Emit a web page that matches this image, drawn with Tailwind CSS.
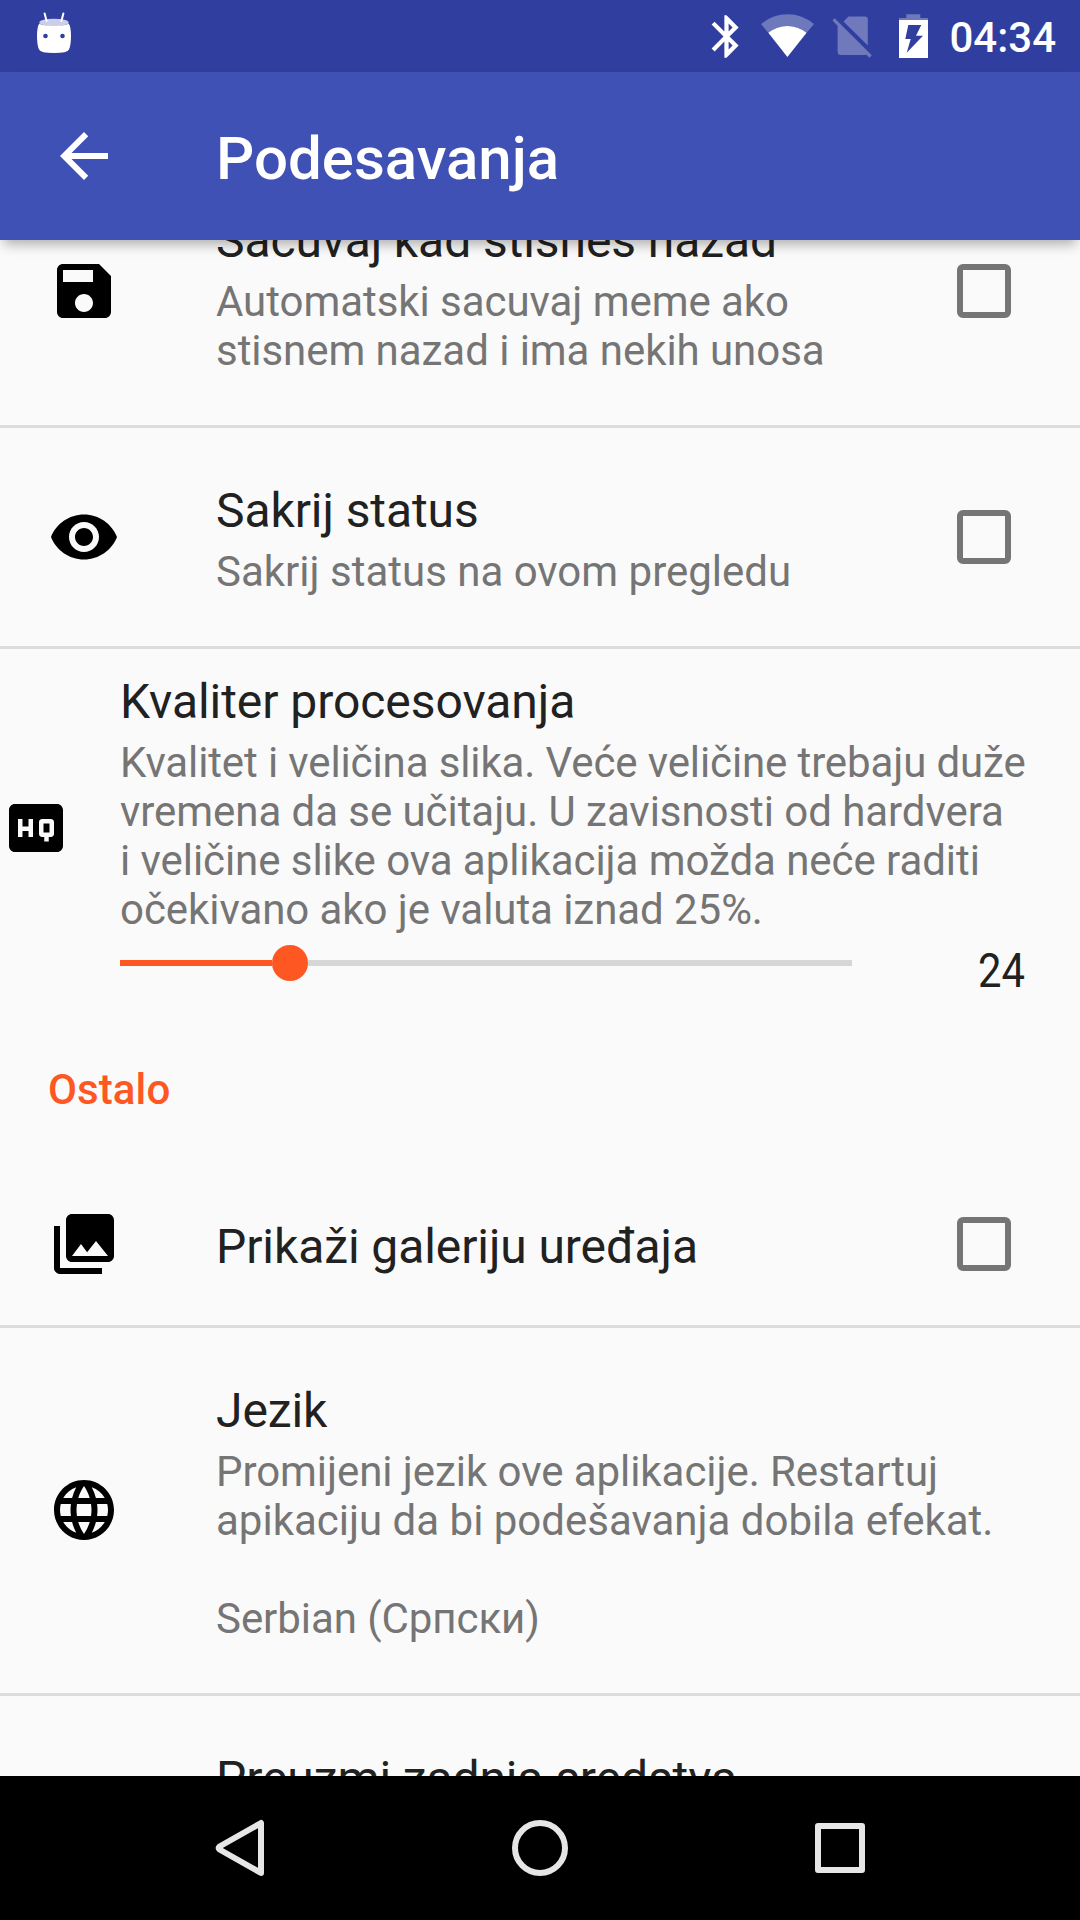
<!DOCTYPE html>
<html lang="sr-Latn">
<head>
<meta charset="utf-8">
<title>Podesavanja</title>
<script src="https://cdn.jsdelivr.net/npm/@tailwindcss/browser@4"></script>
</head>
<body class="bg-[#fafafa] font-['Roboto',sans-serif] text-[#212121]">
<div class="flex h-[1920px] w-[1080px] flex-col overflow-hidden">

  <!-- Status bar -->
  <div class="flex h-[72px] shrink-0 items-center bg-[#303f9f] text-white">
    <svg class="ml-[36px] h-[72px] w-[36px]" viewBox="36 0 36 72" fill="#fff">
      <path d="M44.600 13.500L46.600 21M63.400 13.500L61.400 21" stroke="#fff" stroke-width="2" stroke-linecap="round"/>
      <path d="M39.300 23.500C42 26.800 66 26.800 68.700 23.500Q71 27 71 36T69 49.500Q67.500 53 54 53T39 49.500Q37 45 37 36T39.300 23.500Z"/>
      <ellipse cx="54" cy="22.500" rx="14.700" ry="3.800" opacity=".75"/>
      <circle cx="45.500" cy="36" r="2.300" fill="#303f9f"/><circle cx="62.500" cy="36" r="2.300" fill="#303f9f"/>
    </svg>
    <svg class="ml-auto h-[51px] w-[51px]" viewBox="0 0 24 24" fill="#fff"><path d="M17.710 7.710L12 2h-1v7.590L6.410 5 5 6.410 10.590 12 5 17.590 6.410 19 11 14.410V22h1l5.710-5.710-4.300-4.290 4.300-4.290zM13 5.830l1.880 1.880L13 9.590V5.830zm1.880 10.460L13 18.170v-3.760l1.880 1.880z"/></svg>
    <svg class="ml-[8px] h-[72px] w-[56px]" viewBox="760 0 56 72" fill="#fff"><path d="M768.300 32.800L761 24Q772.500 14.200 787.400 14.200T814 24L806.600 32.800Q798 26 787.400 26T768.300 32.800Z" opacity=".3"/><path d="M787.400 57L768.300 32.800Q777 26 787.400 26T806.600 32.800Z"/></svg>
    <svg class="ml-[16px] h-[72px] w-[40px]" viewBox="832 0 40 72" fill="#fff" opacity=".3"><path d="M843.500 21.500L848.500 16.500H865Q867.800 16.500 867.800 19.500V45.500Z"/><path d="M834.600 18.300L871.800 55.300 869.500 57.700 866 54.500Q865.500 55 864 55H841Q837.600 55 837.600 51.500V25.800L832.500 20.600Z"/></svg>
    <svg class="ml-[26px] h-[72px] w-[32px]" viewBox="898 0 32 72" fill="#fff"><path d="M906.300 14.200H920.300V18H928V20H899V18H906.300Z" opacity=".3"/><path fill-rule="evenodd" d="M899 20H928V58H899ZM908.300 25L905.300 39H910.700L906.700 52.700 923 35.700H916L921.300 25Z"/></svg>
    <span class="mt-[2px] mr-[24px] ml-[19px] text-[42px] leading-[49px] font-medium">04:34</span>
  </div>

  <!-- App bar -->
  <div class="relative z-10 flex h-[168px] shrink-0 items-center bg-[#3f51b5] px-[48px] text-white shadow-[0_8px_12px_-4px_rgba(0,0,0,0.32)]">
    <svg class="size-[72px]" viewBox="0 0 24 24" fill="#fff"><path d="M20 11H7.830l5.590-5.590L12 4l-8 8 8 8 1.410-1.410L7.830 13H20v-2z"/></svg>
    <h1 class="mt-[5px] ml-[96px] text-[60px] leading-[70px] font-medium">Podesavanja</h1>
  </div>

  <!-- Preference list -->
  <main class="min-h-0 flex-1 overflow-hidden">
    <div class="-mt-[83px] flex h-[271px] items-center border-b-3 border-[#dcdcdc] px-[48px]">
      <svg class="size-[72px] shrink-0" viewBox="0 0 24 24"><path d="M17 3H5c-1.110 0-2 .9-2 2v14c0 1.100.89 2 2 2h14c1.100 0 2-.9 2-2V7l-4-4zm-5 16c-1.660 0-3-1.340-3-3s1.340-3 3-3 3 1.340 3 3-1.340 3-3 3zm3-10H5V5h10v4z"/></svg>
      <div class="ml-[96px] flex-1 self-start pt-[55px]">
        <h2 class="text-[48px] leading-[58px] tracking-[-0.09px] whitespace-nowrap">Sacuvaj kad stisnes nazad</h2>
        <p class="mt-[7px] text-[42px] leading-[49px] tracking-[-0.05px] whitespace-nowrap text-[#757575]">Automatski sacuvaj meme ako<br>stisnem nazad i ima nekih unosa</p>
      </div>
      <div class="mr-[21px] size-[54px] rounded-[6px] border-6 border-[#757575]"></div>
    </div>

    <div class="flex h-[221px] items-center border-b-3 border-[#dcdcdc] px-[48px]">
      <svg class="size-[72px] shrink-0" viewBox="0 0 24 24"><path d="M12 4.500C7 4.500 2.730 7.610 1 12c1.730 4.390 6 7.500 11 7.500s9.270-3.110 11-7.500c-1.730-4.390-6-7.500-11-7.500zM12 17c-2.760 0-5-2.240-5-5s2.240-5 5-5 5 2.240 5 5-2.240 5-5 5zm0-8c-1.660 0-3 1.340-3 3s1.340 3 3 3 3-1.340 3-3-1.340-3-3-3z"/></svg>
      <div class="ml-[96px] flex-1 self-start pt-[54px]">
        <h2 class="text-[48px] leading-[58px] tracking-[-0.09px]">Sakrij status</h2>
        <p class="mt-[7px] text-[42px] leading-[49px] whitespace-nowrap text-[#757575]">Sakrij status na ovom pregledu</p>
      </div>
      <div class="mr-[21px] size-[54px] rounded-[6px] border-6 border-[#757575]"></div>
    </div>

    <div class="flex h-[358px] items-center">
      <svg class="size-[72px] shrink-0" viewBox="0 0 24 24"><path d="M19 4H5c-1.110 0-2 .9-2 2v12c0 1.100.89 2 2 2h14c1.100 0 2-.9 2-2V6c0-1.100-.9-2-2-2zm-8 11H9.500v-2h-2v2H6V9h1.500v2.500h2V9H11v6zm7-1c0 .55-.45 1-1 1h-.75v1.500h-1.500V15H14c-.55 0-1-.45-1-1v-4c0-.55.450-1 1-1h3c.55 0 1 .45 1 1v4zm-3.500-.5h2v-3h-2v3z"/></svg>
      <div class="ml-[48px] flex-1 self-start pt-[24px]">
        <h2 class="text-[48px] leading-[58px] tracking-[-0.06px]">Kvaliter procesovanja</h2>
        <p class="mt-[7px] text-[42px] leading-[49px] tracking-[-0.06px] whitespace-nowrap text-[#757575]"><span class="tracking-[-0.12px]">Kvalitet i veličina slika. Veće veličine trebaju duže</span><br>vremena da se učitaju. U zavisnosti od hardvera<br>i veličine slike ova aplikacija možda neće raditi<br>očekivano ako je valuta iznad 25%.</p>
        <div class="flex h-[73px] items-start">
          <div class="mt-[11px] flex h-[36px] w-[732px] items-center">
            <div class="h-[6px] w-[152px] bg-[#ff5722]"></div>
            <div class="size-[36px] rounded-full bg-[#ff5722]"></div>
            <div class="h-[6px] flex-1 bg-[#d6d6d6]"></div>
          </div>
          <span class="mt-[9px] mr-[55px] ml-auto origin-right scale-x-[0.87] text-[48px] leading-[56px]">24</span>
        </div>
      </div>
    </div>

    <div class="flex h-[156px] items-start px-[48px] pt-[58px] text-[42px] leading-[49px] font-medium tracking-[0.1px] text-[#ff5722]">Ostalo</div>

    <div class="flex h-[165px] items-center border-b-3 border-[#dcdcdc] px-[48px]">
      <svg class="size-[72px] shrink-0" viewBox="0 0 24 24"><path d="M22 16V4c0-1.100-.9-2-2-2H8c-1.100 0-2 .9-2 2v12c0 1.100.9 2 2 2h12c1.100 0 2-.9 2-2zm-11-4l2.030 2.710L16 11l4 5H8l3-4zM2 6v14c0 1.100.9 2 2 2h14v-2H4V6H2z"/></svg>
      <h2 class="mt-[6px] ml-[96px] flex-1 text-[48px] leading-[56px] tracking-[-0.09px]">Prikaži galeriju uređaja</h2>
      <div class="mr-[21px] size-[54px] rounded-[6px] border-6 border-[#757575]"></div>
    </div>

    <div class="flex h-[368px] items-center border-b-3 border-[#dcdcdc] px-[48px]">
      <svg class="mb-[2px] size-[72px] shrink-0" viewBox="0 0 24 24"><path d="M11.990 2C6.470 2 2 6.480 2 12s4.470 10 9.990 10C17.520 22 22 17.520 22 12S17.520 2 11.990 2zm6.930 6h-2.950c-.32-1.250-.78-2.450-1.380-3.560 1.840.63 3.370 1.910 4.330 3.560zM12 4.040c.83 1.200 1.480 2.530 1.910 3.960h-3.820c.43-1.430 1.080-2.760 1.910-3.960zM4.260 14C4.100 13.360 4 12.690 4 12s.1-1.360.26-2h3.380c-.08.66-.14 1.320-.14 2 0 .68.060 1.340.14 2H4.260zm.82 2h2.950c.32 1.250.78 2.450 1.380 3.560-1.840-.63-3.370-1.900-4.330-3.560zm2.950-8H5.080c.96-1.660 2.490-2.930 4.330-3.560C8.810 5.550 8.350 6.750 8.030 8zM12 19.960c-.83-1.200-1.480-2.530-1.910-3.960h3.820c-.43 1.430-1.080 2.760-1.910 3.960zM14.340 14H9.660c-.09-.66-.16-1.320-.16-2 0-.68.070-1.350.16-2h4.680c.09.65.16 1.320.16 2 0 .68-.07 1.340-.16 2zm.25 5.560c.6-1.110 1.060-2.310 1.380-3.560h2.950c-.96 1.650-2.490 2.930-4.330 3.560zM16.360 14c.08-.66.14-1.320.14-2 0-.68-.06-1.340-.14-2h3.380c.16.640.26 1.310.26 2s-.1 1.360-.26 2h-3.380z"/></svg>
      <div class="ml-[96px] flex-1 self-start pt-[54px]">
        <h2 class="text-[48px] leading-[58px] tracking-[-0.09px]">Jezik</h2>
        <p class="mt-[7px] text-[42px] leading-[49px] whitespace-nowrap text-[#757575]"><span class="tracking-[-0.06px]">Promijeni jezik ove aplikacije. Restartuj</span><br>apikaciju da bi podešavanja dobila efekat.<br><br><span class="tracking-[-0.06px]">Serbian (Српски)</span></p>
      </div>
    </div>

    <div class="pt-[54px] pl-[216px]">
      <h2 class="text-[48px] leading-[58px] tracking-[-0.09px] whitespace-nowrap">Preuzmi zadnja sredstva</h2>
    </div>
  </main>

  <!-- Navigation bar -->
  <nav class="flex h-[144px] shrink-0 items-center justify-center gap-[228px] bg-black">
    <svg class="size-[72px]" viewBox="0 0 72 72" fill="none" stroke="#e6e6e6" stroke-width="6" stroke-linejoin="round"><path d="M57 11V61L15.500 37.500Q14 36 15.500 34.500Z"/></svg>
    <svg class="size-[72px]" viewBox="0 0 72 72" fill="none" stroke="#e6e6e6" stroke-width="6"><circle cx="36" cy="36" r="25"/></svg>
    <svg class="size-[72px]" viewBox="0 0 72 72" fill="none" stroke="#e6e6e6" stroke-width="6" stroke-linejoin="round"><rect x="14" y="14" width="44" height="44"/></svg>
  </nav>
</div>
</body>
</html>
